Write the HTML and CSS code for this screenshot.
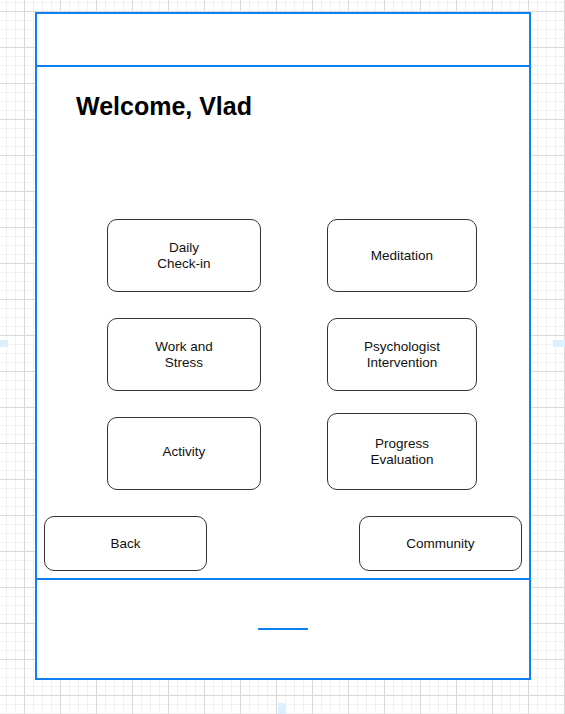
FILE: index.html
```html
<!DOCTYPE html>
<html>
<head>
<meta charset="utf-8">
<link rel="stylesheet" href="styles.css">
</head>
<body>
<div class="marker marker-left"></div>
<div class="marker marker-right"></div>
<div class="marker marker-bottom"></div>
<div class="phone">
  <div class="header"></div>
  <div class="content">
    <h1 class="title">Welcome, Vlad</h1>
    <div class="menu">
      <div class="btn">Daily<br>Check-in</div>
      <div class="btn">Meditation</div>
      <div class="btn">Work and<br>Stress</div>
      <div class="btn">Psychologist<br>Intervention</div>
      <div class="btn btn-raised">Activity</div>
      <div class="btn btn-tall">Progress<br>Evaluation</div>
    </div>
    <div class="nav">
      <div class="btn btn-wide">Back</div>
      <div class="btn btn-wide">Community</div>
    </div>
  </div>
  <div class="footer">
    <div class="home-line"></div>
  </div>
</div>
</body>
</html>
```
FILE: styles.css
```css
html, body {
  margin: 0;
  padding: 0;
}
body {
  width: 565px;
  height: 714px;
  overflow: hidden;
  position: relative;
  font-family: "Liberation Sans", Arial, sans-serif;
  background-color: #ffffff;
  background-image:
    linear-gradient(to right, #d9d9d9 1px, transparent 1px),
    linear-gradient(to bottom, #d9d9d9 1px, transparent 1px),
    linear-gradient(to right, #f1f1f1 1px, transparent 1px),
    linear-gradient(to bottom, #f1f1f1 1px, transparent 1px);
  background-size: 36px 36px, 36px 36px, 9px 9px, 9px 9px;
  background-position: 24px 0, 0 11px, 24px 0, 0 11px;
}
.marker {
  position: absolute;
  background: #dcefff;
}
.marker-left {
  left: 0;
  top: 340px;
  width: 8px;
  height: 7px;
}
.marker-right {
  left: 553px;
  top: 340px;
  width: 12px;
  height: 7px;
}
.marker-bottom {
  left: 278px;
  top: 703px;
  width: 8px;
  height: 11px;
}
.phone {
  position: relative;
  margin: 12px 0 0 35px;
  width: 496px;
  height: 668px;
  box-sizing: border-box;
  border: 2px solid #0f80f2;
  background: #ffffff;
  display: flex;
  flex-direction: column;
}
.header {
  height: 53px;
  box-sizing: border-box;
  border-bottom: 2px solid #0f80f2;
  flex: none;
}
.content {
  height: 511px;
  flex: none;
  display: flex;
  flex-direction: column;
}
.title {
  margin: 25px 0 0 39px;
  font-size: 25px;
  line-height: 29px;
  font-weight: bold;
  color: #000;
}
.menu {
  margin: 98px 0 0 70px;
  display: grid;
  grid-template-columns: 154px 150px;
  grid-template-rows: 73px 73px 73px;
  column-gap: 66px;
  row-gap: 26px;
}
.btn {
  box-sizing: border-box;
  border: 1px solid #333;
  border-radius: 10px;
  display: flex;
  align-items: center;
  justify-content: center;
  text-align: center;
  font-size: 13.5px;
  line-height: 16px;
  color: #111;
}
.btn-raised {
  padding-bottom: 4px;
}
.btn-tall {
  height: 77px;
  align-self: end;
}
.nav {
  margin: 26px 7px 0 7px;
  display: flex;
  justify-content: space-between;
}
.btn-wide {
  width: 163px;
  height: 55px;
}
.footer {
  flex: 1;
  box-sizing: border-box;
  border-top: 2px solid #0f80f2;
  display: flex;
  align-items: center;
  justify-content: center;
}
.home-line {
  width: 50px;
  height: 2px;
  background: #0f80f2;
}
```
